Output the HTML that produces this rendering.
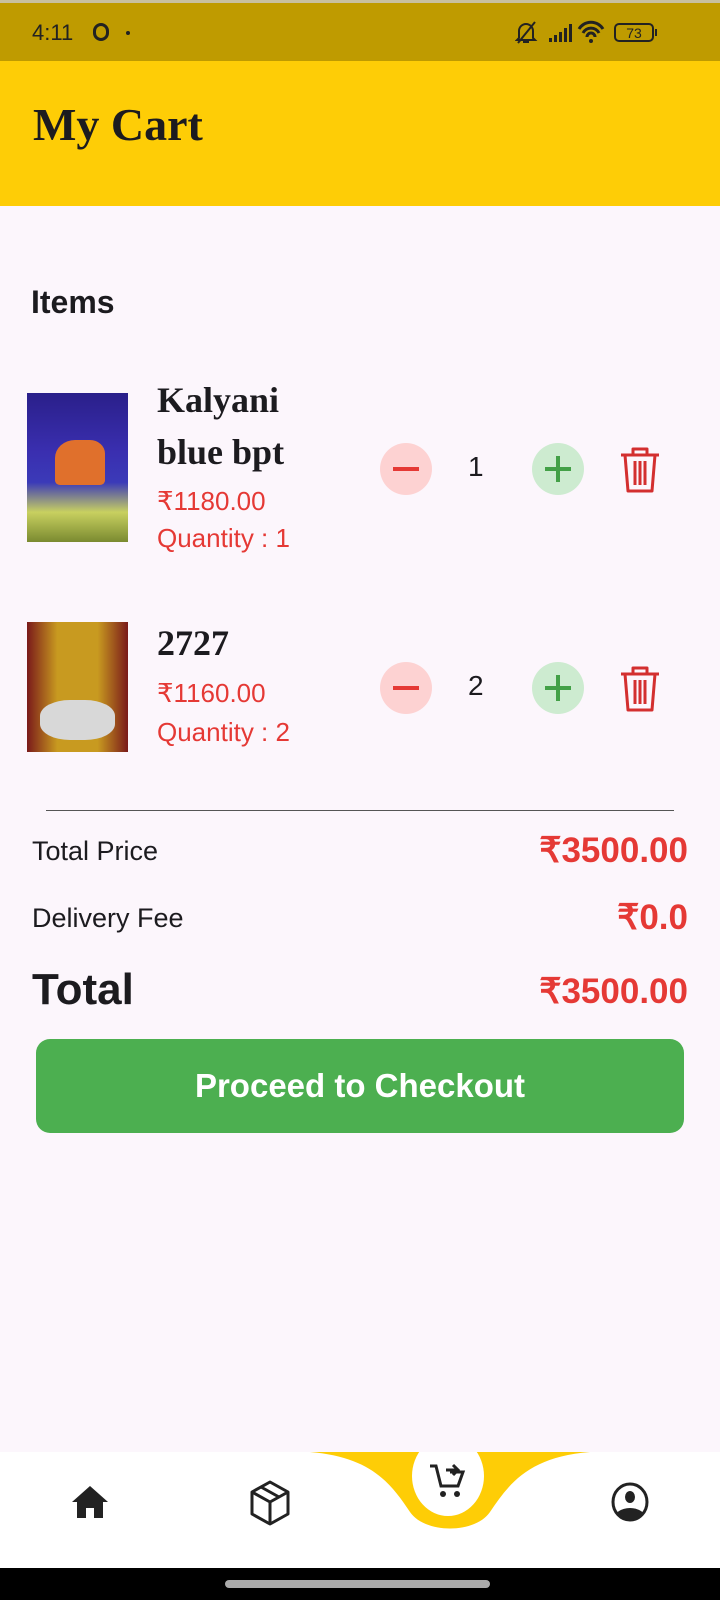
<!DOCTYPE html>
<html><head><meta charset="utf-8"><style>
*{margin:0;padding:0;box-sizing:border-box}
body{width:720px;height:1600px;background:#fcf6fc;font-family:"Liberation Sans",sans-serif;position:relative;overflow:hidden;color:#1c1b1f}
.a{position:absolute}
.serif{font-family:"Liberation Serif",serif}
.red{color:#e53935}
.circ{position:absolute;width:52px;height:52px;border-radius:50%}
</style></head><body>
<div class="a" style="left:0;top:0;width:720px;height:61px;background:#bf9b00"></div>
<div class="a" style="left:0;top:0;width:720px;height:3px;background:#c8c0a0"></div>
<div class="a" style="left:32px;top:20px;font-size:22px;color:#222">4:11</div>
<div class="a" style="left:93px;top:23px;width:16px;height:18px;border:3.5px solid #222;border-radius:8px"></div>
<div class="a" style="left:126px;top:31px;width:4px;height:4px;border-radius:50%;background:#222"></div>
<svg class="a" style="left:515px;top:20px" width="160" height="26" viewBox="0 0 160 26">
<path d="M4 18 L4 11 A7 7 0 0 1 18 11 L18 18 L20 20 L2 20 Z M8 22 h6" fill="none" stroke="#222" stroke-width="2"/><path d="M3 23 L20 2" stroke="#222" stroke-width="2"/>
<rect x="34" y="18" width="3" height="4" fill="#222"/><rect x="39" y="15" width="3" height="7" fill="#222"/><rect x="44" y="12" width="3" height="10" fill="#222"/><rect x="49" y="8" width="3" height="14" fill="#222"/><rect x="54" y="4" width="3" height="18" fill="#222"/>
<path d="M64 9 A14 14 0 0 1 88 9 M68 13 A9 9 0 0 1 84 13 M72 17 A4 4 0 0 1 80 17" fill="none" stroke="#222" stroke-width="3"/><circle cx="76" cy="21" r="2" fill="#222"/>
<rect x="100" y="4" width="38" height="17" rx="4" fill="none" stroke="#222" stroke-width="2"/><rect x="140" y="9" width="2" height="7" fill="#222"/>
<text x="119" y="18" font-size="14" text-anchor="middle" fill="#222" font-family="Liberation Sans">73</text></svg>
<div class="a" style="left:0;top:61px;width:720px;height:145px;background:#fecd06"></div>
<div class="a serif" style="left:33px;top:98px;font-size:46px;font-weight:bold;color:#1c1b1f">My Cart</div>
<div class="a" style="left:31px;top:284px;font-size:32px;font-weight:bold">Items</div>

<div class="a" style="left:27px;top:393px;width:101px;height:149px;background:linear-gradient(#2a1f8a,#3a2fb0 40%,#3b3ab8 60%,#c8d060 80%,#7a8a30)"></div>
<div class="a" style="left:55px;top:440px;width:50px;height:45px;background:#e0702c;border-radius:40% 30% 10% 10%"></div>
<div class="a serif" style="left:157px;top:374px;font-size:36px;line-height:52px;font-weight:bold;color:#1c1b1f">Kalyani<br>blue bpt</div>
<div class="a red" style="left:157px;top:486px;font-size:26px">₹1180.00</div>
<div class="a red" style="left:157px;top:523px;font-size:26px">Quantity : 1</div>

<div class="a" style="left:27px;top:622px;width:101px;height:130px;background:linear-gradient(90deg,#7a1a1a,#c89a20 30%,#c89a20 70%,#7a1a1a)"></div>
<div class="a" style="left:40px;top:700px;width:75px;height:40px;background:#d8d8d8;border-radius:40%"></div>
<div class="a serif" style="left:157px;top:622px;font-size:36px;font-weight:bold">2727</div>
<div class="a red" style="left:157px;top:678px;font-size:26px">₹1160.00</div>
<div class="a red" style="left:157px;top:717px;font-size:26px">Quantity : 2</div>

<div class="circ" style="left:380px;top:443px;background:#fdd2d2"></div>
<div class="a" style="left:393px;top:467px;width:26px;height:4px;background:#e53935"></div>
<div class="a" style="left:468px;top:451px;font-size:28px">1</div>
<div class="circ" style="left:532px;top:443px;background:#cdebd0"></div>
<div class="a" style="left:545px;top:467px;width:26px;height:4px;background:#43a047"></div>
<div class="a" style="left:556px;top:456px;width:4px;height:26px;background:#43a047"></div>
<svg class="a" style="left:618px;top:446px" width="44" height="48" viewBox="0 0 44 48"><path d="M3 9 H41 M15 9 V3 H29 V9 M7 9 L10 45 H34 L37 9 M17 15 V39 M22 15 V39 M27 15 V39" fill="none" stroke="#d32f2f" stroke-width="3" stroke-linejoin="round"/></svg>

<div class="circ" style="left:380px;top:662px;background:#fdd2d2"></div>
<div class="a" style="left:393px;top:686px;width:26px;height:4px;background:#e53935"></div>
<div class="a" style="left:468px;top:670px;font-size:28px">2</div>
<div class="circ" style="left:532px;top:662px;background:#cdebd0"></div>
<div class="a" style="left:545px;top:686px;width:26px;height:4px;background:#43a047"></div>
<div class="a" style="left:556px;top:675px;width:4px;height:26px;background:#43a047"></div>
<svg class="a" style="left:618px;top:665px" width="44" height="48" viewBox="0 0 44 48"><path d="M3 9 H41 M15 9 V3 H29 V9 M7 9 L10 45 H34 L37 9 M17 15 V39 M22 15 V39 M27 15 V39" fill="none" stroke="#d32f2f" stroke-width="3" stroke-linejoin="round"/></svg>

<div class="a" style="left:46px;top:810px;width:628px;height:1px;background:#555"></div>
<div class="a" style="left:32px;top:836px;font-size:27px">Total Price</div>
<div class="a red" style="right:32px;top:831px;font-size:35px;font-weight:bold">₹3500.00</div>
<div class="a" style="left:32px;top:903px;font-size:27px">Delivery Fee</div>
<div class="a red" style="right:32px;top:898px;font-size:35px;font-weight:bold">₹0.0</div>
<div class="a" style="left:32px;top:965px;font-size:44px;font-weight:bold">Total</div>
<div class="a red" style="right:32px;top:972px;font-size:35px;font-weight:bold">₹3500.00</div>
<div class="a" style="left:36px;top:1039px;width:648px;height:94px;background:#4caf50;border-radius:14px;color:#fff;font-size:33px;font-weight:bold;text-align:center;line-height:94px">Proceed to Checkout</div>

<div class="a" style="left:0;top:1452px;width:720px;height:116px;background:#fff"></div>
<svg class="a" style="left:300px;top:1452px" width="300" height="82" viewBox="0 0 300 82"><path d="M10 0 C70 5 90 30 110 60 C125 82 175 82 190 60 C210 30 230 5 290 0 Z" fill="#fecd06"/><ellipse cx="148" cy="24" rx="36" ry="40" fill="#fff"/></svg>
<svg class="a" style="left:428px;top:1462px" width="40" height="38" viewBox="0 0 40 38"><path d="M2 4 H8 L13 24 H30 L35 10 H22" fill="none" stroke="#222" stroke-width="3"/><path d="M18 8 H30 M25 3 L30 8 L25 13" fill="none" stroke="#222" stroke-width="3"/><circle cx="15" cy="32" r="3" fill="#222"/><circle cx="29" cy="32" r="3" fill="#222"/></svg>
<svg class="a" style="left:70px;top:1484px" width="40" height="36" viewBox="0 0 40 36"><path d="M20 2 L38 18 H33 V34 H24 V24 H16 V34 H7 V18 H2 Z" fill="#222"/></svg>
<svg class="a" style="left:249px;top:1480px" width="42" height="46" viewBox="0 0 42 46"><path d="M21 2 L39 12 V34 L21 44 L3 34 V12 Z M3 12 L21 22 L39 12 M21 22 V44 M12 7 L30 17" fill="none" stroke="#222" stroke-width="3" stroke-linejoin="round"/></svg>
<svg class="a" style="left:610px;top:1481px" width="40" height="42" viewBox="0 0 40 42"><defs><clipPath id="c"><ellipse cx="20" cy="21" rx="17" ry="18"/></clipPath></defs><ellipse cx="20" cy="21" rx="17" ry="18" fill="none" stroke="#222" stroke-width="3"/><g clip-path="url(#c)"><ellipse cx="20" cy="16" rx="5" ry="6" fill="#222"/><ellipse cx="20" cy="38" rx="16" ry="11" fill="#222"/></g></svg>

<div class="a" style="left:0;top:1568px;width:720px;height:32px;background:#000"></div>
<div class="a" style="left:225px;top:1580px;width:265px;height:8px;border-radius:4px;background:#aaa"></div>
</body></html>
